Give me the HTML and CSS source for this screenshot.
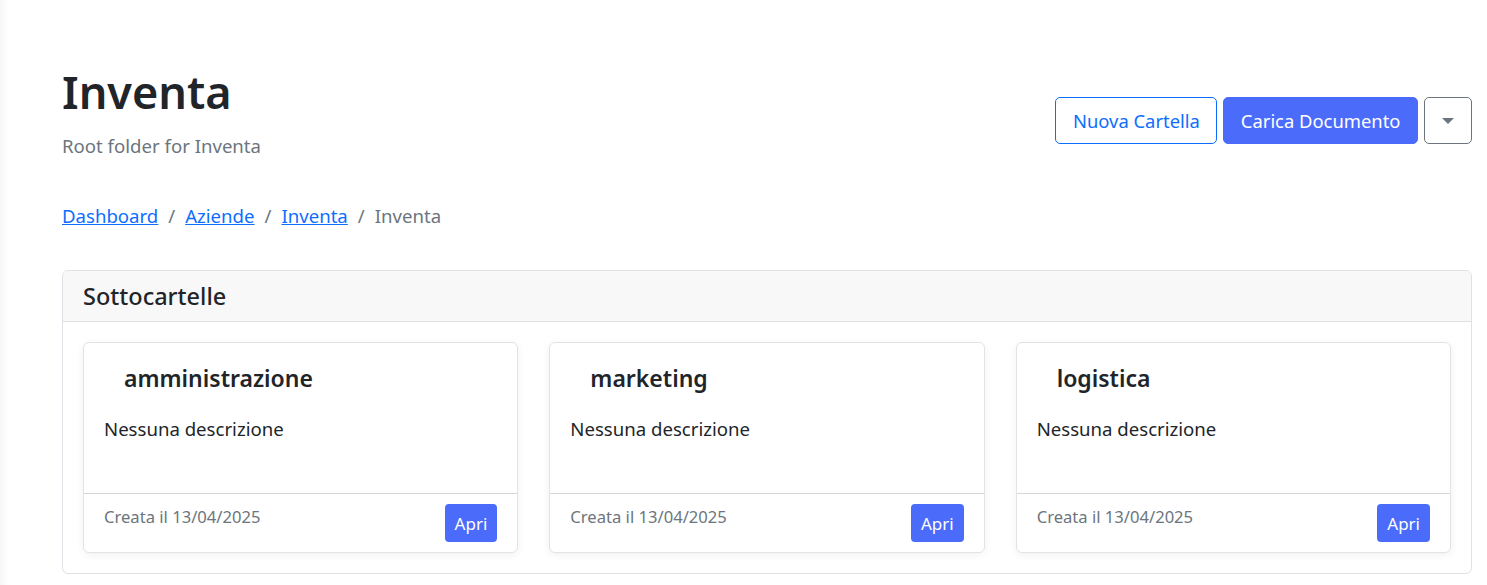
FILE: index.html
```html
<!DOCTYPE html>
<html lang="it">
<head>
<meta charset="utf-8">
<title>Inventa</title>
<link rel="stylesheet" href="styles.css">
</head>
<body>
<main class="main">
  <header class="page-head">
    <div class="titles">
      <h1 class="title">Inventa</h1>
      <p class="subtitle">Root folder for Inventa</p>
    </div>
    <div class="actions">
      <button class="btn btn-outline">Nuova Cartella</button>
      <button class="btn btn-primary">Carica Documento</button>
      <button class="btn btn-caret" aria-label="Altro"><span class="caret"></span></button>
    </div>
  </header>

  <nav class="breadcrumb">
    <a href="#">Dashboard</a><span class="sep">/</span>
    <a href="#">Aziende</a><span class="sep">/</span>
    <a href="#">Inventa</a><span class="sep">/</span>
    <span class="current">Inventa</span>
  </nav>

  <section class="panel">
    <div class="panel-head">Sottocartelle</div>
    <div class="panel-body">
      <article class="folder">
        <div class="folder-body">
          <h3 class="folder-title">amministrazione</h3>
          <p class="folder-desc">Nessuna descrizione</p>
        </div>
        <div class="folder-foot">
          <span class="date">Creata il 13/04/2025</span>
          <button class="btn-sm">Apri</button>
        </div>
      </article>
      <article class="folder">
        <div class="folder-body">
          <h3 class="folder-title">marketing</h3>
          <p class="folder-desc">Nessuna descrizione</p>
        </div>
        <div class="folder-foot">
          <span class="date">Creata il 13/04/2025</span>
          <button class="btn-sm">Apri</button>
        </div>
      </article>
      <article class="folder">
        <div class="folder-body">
          <h3 class="folder-title">logistica</h3>
          <p class="folder-desc">Nessuna descrizione</p>
        </div>
        <div class="folder-foot">
          <span class="date">Creata il 13/04/2025</span>
          <button class="btn-sm">Apri</button>
        </div>
      </article>
    </div>
  </section>
</main>
</body>
</html>
```

FILE: styles.css
```css
* { box-sizing: border-box; }
html, body { margin: 0; padding: 0; }
body {
  font-family: "Noto Sans", "Open Sans", "Liberation Sans", sans-serif;
  color: #212529;
  background: #fff;
  width: 1487px;
  height: 585px;
  overflow: hidden;
  box-shadow: inset 8px 0 8px -6px rgba(0,0,0,0.06);
}
.main {
  padding: 64px 15px 0 62px;
}
.page-head {
  display: flex;
  justify-content: space-between;
  align-items: flex-start;
}
.title {
  margin: 0;
  font-size: 45px;
  font-weight: 600;
  line-height: 56px;
  color: #212529;
}
.subtitle {
  margin: 13px 0 0;
  font-size: 18.6px;
  line-height: 26px;
  color: #6c757d;
}
.actions {
  display: flex;
  gap: 6px;
  margin-top: 33px;
}
.btn {
  font-family: inherit;
  font-size: 18.4px;
  height: 47px;
  padding: 0 16.5px;
  border-radius: 5px;
  border: 1px solid #0d6efd;
  background: #fff;
  color: #0d6efd;
}
.btn-primary {
  background: #4b6bfb;
  border-color: #4b6bfb;
  color: #fff;
}
.btn-caret {
  width: 48px;
  border-color: #6c757d;
  padding: 0;
  display: flex;
  align-items: center;
  justify-content: center;
}
.caret {
  width: 0; height: 0;
  border-left: 6px solid transparent;
  border-right: 6px solid transparent;
  border-top: 6px solid #6c757d;
}
.breadcrumb {
  margin-top: 44px;
  font-size: 18.6px;
  color: #6c757d;
  display: flex;
  align-items: baseline;
}
.breadcrumb a { color: #0d6efd; }
.breadcrumb .sep { padding: 0 10px; }
.panel {
  margin-top: 42px;
  border: 1px solid #dee2e6;
  border-radius: 6px;
  overflow: hidden;
}
.panel-head {
  background: #f8f8f8;
  border-bottom: 1px solid #dee2e6;
  height: 51px;
  padding: 0 20px;
  display: flex;
  align-items: center;
  font-size: 23.5px;
  font-weight: 500;
}
.panel-body {
  padding: 20px 20px 20px;
  display: grid;
  grid-template-columns: repeat(3, 1fr);
  gap: 31px;
}
.folder {
  border: 1px solid #e3e3e3;
  border-radius: 6px;
  box-shadow: 0 2px 8px rgba(0,0,0,0.06);
  background: #fff;
  height: 211px;
  display: flex;
  flex-direction: column;
}
.folder-body {
  flex: 1;
  padding: 19px 20px 0;
}
.folder-title {
  margin: 0 0 0 20px;
  font-size: 23px;
  font-weight: 600;
  line-height: 32px;
}
.folder-desc {
  margin: 22px 0 0;
  font-size: 18.6px;
}
.folder-foot {
  border-top: 1px solid #d6d6d6;
  height: 59px;
  padding: 10px 20px 10px;
  display: flex;
  justify-content: space-between;
  align-items: flex-start;
}
.date {
  font-size: 16.6px;
  color: #6c757d;
  margin-top: 1px;
}
.btn-sm {
  font-family: inherit;
  font-size: 17px;
  background: #4b6bfb;
  color: #fff;
  border: 0;
  border-radius: 4px;
  height: 38px;
  padding: 0 10px;
}
```
